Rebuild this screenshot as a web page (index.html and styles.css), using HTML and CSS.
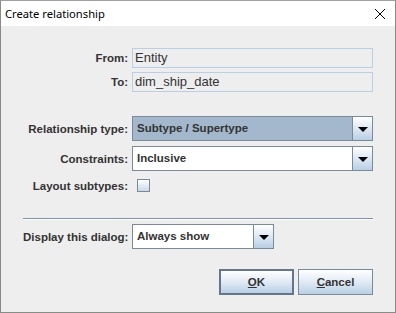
FILE: index.html
```html
<!DOCTYPE html>
<html lang="en">
<head>
    <meta charset="UTF-8">
    <title>Create relationship</title>
    <link rel="stylesheet" href="styles.css">
</head>
<body>

<div class="dialog">
    <div class="title-bar">
        <span class="title">Create relationship</span>
        <svg class="close-icon" width="12" height="12" viewBox="0 0 12 12">
            <path d="M1 1 L11 11 M11 1 L1 11" stroke="#000" stroke-width="1" fill="none"/>
        </svg>
    </div>

    <div class="content">
        <div class="form-grid ends">
            <label class="label">From:</label>
            <div class="text-field">Entity</div>
            <label class="label">To:</label>
            <div class="text-field">dim_ship_date</div>
        </div>

        <div class="form-grid options">
            <label class="label">Relationship type:</label>
            <div class="combo selected">
                <span class="combo-value">Subtype / Supertype</span>
                <span class="combo-arrow"><span class="triangle"></span></span>
            </div>
            <label class="label">Constraints:</label>
            <div class="combo">
                <span class="combo-value">Inclusive</span>
                <span class="combo-arrow"><span class="triangle"></span></span>
            </div>
            <label class="label">Layout subtypes:</label>
            <div class="check-cell"><span class="checkbox"></span></div>
        </div>

        <div class="separator"></div>

        <div class="form-grid display">
            <label class="label">Display this dialog:</label>
            <div class="combo small">
                <span class="combo-value">Always show</span>
                <span class="combo-arrow"><span class="triangle"></span></span>
            </div>
        </div>

        <div class="buttons">
            <button type="button" class="btn default"><u>O</u>K</button>
            <button type="button" class="btn"><u>C</u>ancel</button>
        </div>
    </div>
</div>

</body>
</html>
```

FILE: styles.css
```css
body {
    margin: 0;
    padding: 0;
    font-family: "Liberation Sans", Arial, sans-serif;
    font-size: 12px;
    color: #333333;
}

.dialog {
    width: 396px;
    height: 313px;
    box-sizing: border-box;
    border: 1px solid #8a8a8a;
    border-top-color: #a0a0a0;
    background-color: #eeeeee;
    display: flex;
    flex-direction: column;
}

.title-bar {
    height: 25px;
    background-color: #ffffff;
    display: flex;
    align-items: center;
    justify-content: space-between;
    padding: 0 9px 0 4px;
}

.title {
    font-family: "Noto Sans", "Open Sans", sans-serif;
    font-size: 11.2px;
    color: #000000;
}

.close-icon {
    display: block;
}

.content {
    padding: 22px 22px 0 22px;
}

.form-grid {
    display: grid;
    grid-template-columns: 105px 241px;
    column-gap: 4px;
    align-items: center;
}

.ends {
    row-gap: 4px;
}

.options {
    margin-top: 24px;
    row-gap: 5px;
}

.display {
    margin-top: 4px;
}

.label {
    text-align: right;
    white-space: nowrap;
    font-weight: bold;
    font-size: 11.5px;
    color: #333333;
}

.text-field {
    height: 20px;
    box-sizing: border-box;
    border: 1px solid #b8cfe5;
    padding: 0 2px;
    line-height: 18px;
    font-size: 13px;
}

.combo {
    height: 25px;
    box-sizing: border-box;
    border: 1px solid #7a8a99;
    display: flex;
    background-color: #ffffff;
}

.combo.selected {
    background-color: #a3b8cc;
}

.combo.small {
    width: 142px;
}

.combo-value {
    flex: 1;
    border: 1px solid #ffffff;
    border-right: none;
    padding: 0 3px;
    line-height: 21px;
    font-weight: bold;
    font-size: 11.5px;
    color: #333333;
}

.combo.selected .combo-value {
    border-color: #a3b8cc;
}

.combo-arrow {
    width: 19px;
    border-left: 1px solid #7a8a99;
    background: linear-gradient(to bottom, #ffffff 0%, #dde8f3 50%, #b8cfe5 100%);
    display: flex;
    align-items: center;
    justify-content: center;
}

.triangle {
    width: 0;
    height: 0;
    border-left: 5px solid transparent;
    border-right: 5px solid transparent;
    border-top: 5px solid #000000;
    margin-top: 1px;
}

.check-cell {
    height: 19px;
    display: flex;
    align-items: center;
}

.checkbox {
    width: 11px;
    height: 11px;
    margin-left: 5px;
    border: 1px solid #7a8a99;
    background: linear-gradient(to bottom, #ffffff 0%, #dde8f3 60%, #c8d8e8 100%);
}

.separator {
    margin-top: 23px;
    height: 1px;
    background-color: #7b8fb8;
    border-bottom: 1px solid #ffffff;
}

.buttons {
    margin-top: 20px;
    display: flex;
    justify-content: flex-end;
    gap: 4px;
}

.btn {
    height: 26px;
    box-sizing: border-box;
    border: 1px solid #7a8a99;
    background: linear-gradient(to bottom, #ffffff 0%, #dde8f3 55%, #b8cfe5 100%);
    font-family: "Liberation Sans", Arial, sans-serif;
    font-size: 11.5px;
    font-weight: bold;
    color: #333333;
    width: 75px;
    padding: 0;
}

.btn.default {
    border: 2px solid #63768a;
}
```
